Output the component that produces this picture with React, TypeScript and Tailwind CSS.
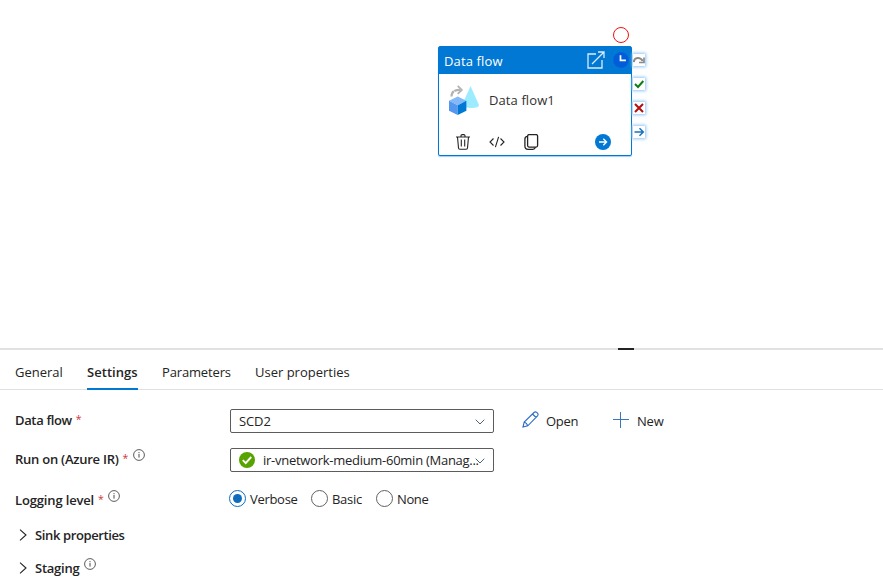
import type { ReactNode } from 'react';

const INK = 'text-[#242424]';

function Info({ className = '' }: { className?: string }) {
  return (
    <svg className={`shrink-0 ${className}`} width="12" height="12" viewBox="0 0 12 12" fill="none">
      <circle cx="6" cy="6" r="5.4" stroke="#4a4a4a" strokeWidth="0.9" />
      <path d="M6 5v3.6M6 3.1v1.1" stroke="#4a4a4a" strokeWidth="1" />
    </svg>
  );
}

function ChevronDown() {
  return (
    <svg className="mt-0.5 shrink-0" width="10" height="6" viewBox="0 0 10 6" fill="none">
      <path d="M.7.7 5 5 9.3.7" stroke="#4f6272" strokeWidth="1" />
    </svg>
  );
}

function ChevronRight() {
  return (
    <svg className="mr-2 ml-[19px] shrink-0" width="8" height="12" viewBox="0 0 8 12" fill="none">
      <path d="M1 .6 7 6 1 11.4" stroke="#242424" strokeWidth="1.1" />
    </svg>
  );
}

function Port({ children }: { children: ReactNode }) {
  return (
    <div className="flex h-3 w-3 items-center justify-center bg-white shadow-[0_0_3px_1px_#8fc5f2]">{children}</div>
  );
}

function Label({ children, className, required, info }: { children: ReactNode; className: string; required?: boolean; info?: boolean }) {
  return (
    <div className={`flex w-[215px] shrink-0 items-center ${className}`}>
      <span className="font-semibold whitespace-nowrap">{children}</span>
      {required && <span className="mb-0.5 ml-1 w-[5px] text-[10.5px] tracking-normal text-[#d13438]">*</span>}
      {info && <Info className="mb-[9px] ml-[5px]" />}
    </div>
  );
}

function Radio({ checked, children, className }: { checked?: boolean; children: ReactNode; className: string }) {
  return (
    <label className={`flex items-center ${className}`}>
      <span className={`mr-1 flex h-[17px] w-[17px] shrink-0 items-center justify-center rounded-full border ${checked ? 'border-[#0f6cbd]' : 'border-[#616161]'}`}>
        {checked && <span className="h-[9px] w-[9px] rounded-full bg-[#0f6cbd]" />}
      </span>
      <span className="mt-px">{children}</span>
    </label>
  );
}

function ActivityNode() {
  return (
    <div className="absolute top-[46px] left-[438px] h-[110px] w-[194px] rounded-[2px] border border-[#0078d4] bg-white shadow-[0_1px_1px_#9fceef]">
      <div className="flex h-[27px] items-center bg-[#0078d4] pl-[5px] text-white">
        <span className="w-[143px] text-[13px] tracking-[0.14px]">Data flow</span>
        <svg className="mb-0.5" width="18" height="18" viewBox="0 0 18 18" fill="none" stroke="#d9ebf9" strokeWidth="1.3">
          <path d="M9 3H1v14h14V9M5 13 17 1M11 1h6v6" />
        </svg>
        <svg className="mb-0.5 ml-2" width="16" height="16" viewBox="0 0 16 16">
          <circle cx="8" cy="8" r="7.8" fill="#015cda" />
          <path d="M7.5 3.2v5.2h5.4" stroke="#fff" strokeWidth="1.7" fill="none" />
        </svg>
      </div>
      <div className="flex h-[54px] items-center pl-2">
        <svg className="mb-0.5" width="34" height="34" viewBox="0 0 34 34">
          <path d="M23.500 3 32 22q0 3-7.500 3-5.500 0-8.500-2.500V20z" fill="#9cebff" />
          <path d="M4.500 13.500C4.500 9 7 6.900 13 6.900" fill="none" stroke="#b3b3b3" strokeWidth="2.200" strokeDasharray="6 .6" />
          <path d="m10.700 2.900 4.100 4-4.100 4" fill="none" stroke="#b3b3b3" strokeWidth="1.800" />
          <path d="m10.700 13.500 8.700 4.300-8.700 4.400L2 17.800z" fill="#83b9f9" />
          <path d="m2 17.800 8.700 4.400v9.900L2 27.700z" fill="#5596ee" />
          <path d="m19.400 17.800-8.700 4.400v9.900l8.700-4.400z" fill="#0078d4" />
        </svg>
        <span className="mb-0.5 ml-2 text-[13px] tracking-[0.1px] text-[#323130]">Data flow1</span>
      </div>
      <div className="flex h-7 items-center pl-[17px]">
        <svg width="14" height="16" viewBox="0 0 14 16" fill="none" stroke="#242424" strokeWidth="1.1">
          <path d="M0 3h14M5 3V1.800Q5 .6 6.200.6h1.600Q9 .6 9 1.800V3M1.500 3l1 11q.1 1.300 1.300 1.300h6.400q1.200 0 1.300-1.300l1-11M5.300 5.500v7M8.700 5.500v7" />
        </svg>
        <svg className="ml-[19px]" width="16" height="12" viewBox="0 0 16 12" fill="none" stroke="#242424" strokeWidth="1.1">
          <path d="M4.500 2.500 1 6l3.500 3.500M11.500 2.500 15 6l-3.500 3.500M9.600.8 6.400 11.200" />
        </svg>
        <svg className="ml-[19px]" width="15" height="16" viewBox="0 0 15 16" fill="none" stroke="#242424" strokeWidth="1.300">
          <rect x="3.600" y=".6" width="10" height="12.500" rx="1.500" />
          <path d="M3.600 2.400Q.9 2.600.9 5v7q0 3.300 3.200 3.300h4.700q2 0 2.600-2" />
        </svg>
        <svg className="ml-14" width="16" height="16" viewBox="0 0 16 16" fill="none">
          <circle cx="8" cy="8" r="8" fill="#0078d4" />
          <path d="M4 8h7.500M8.300 4.700 11.600 8l-3.300 3.300" stroke="#fff" strokeWidth="1.300" />
        </svg>
      </div>
    </div>
  );
}

export default function App() {
  return (
    <div className={`h-[585px] w-[883px] overflow-hidden bg-white font-['Open_Sans','Noto_Sans',sans-serif] text-[13px] leading-[18px] ${INK}`}>
      <div className="relative h-[348px]">
        <div className="absolute top-[27px] left-[613px] h-4 w-4 rounded-full border border-[#f01010]" />
        <ActivityNode />
        <div className="absolute top-[54px] left-[633px] flex flex-col gap-3">
          <Port>
            <svg width="12" height="12" viewBox="0 0 12 12" fill="none" stroke="#8a8a8a">
              <path d="M.8 8.200Q1.200 4 5 4q3 0 4.700 3" strokeWidth="2" />
              <path d="M11 3.500v5H6" strokeWidth="1.700" />
            </svg>
          </Port>
          <Port>
            <svg width="12" height="12" viewBox="0 0 12 12" fill="none">
              <path d="m2 6 3 3 5.300-6" stroke="#107c10" strokeWidth="2" />
            </svg>
          </Port>
          <Port>
            <svg width="12" height="12" viewBox="0 0 12 12" fill="none">
              <path d="m2 2 8 8M10 2l-8 8" stroke="#b50e0e" strokeWidth="2" />
            </svg>
          </Port>
          <Port>
            <svg width="12" height="12" viewBox="0 0 12 12" fill="none">
              <path d="M1.500 6h8.500M6.500 2.200 10.300 6 6.500 9.800" stroke="#1971bd" strokeWidth="1.500" />
            </svg>
          </Port>
        </div>
      </div>
      <div className="h-0.5 bg-[#e1e1e1] pl-[618px]"><div className="h-0.5 w-4 bg-[#242424]" /></div>
      <nav className="flex h-10 border-b border-[#e0e0e0] pl-[15px]">
        <span className="mr-6 w-12 pt-[13px] whitespace-nowrap">General</span>
        <span className="mr-6 h-10 w-[51px] border-b-2 border-[#0078d4] pt-[13px] font-semibold tracking-[0.05px] whitespace-nowrap">Settings</span>
        <span className="mr-6 w-[69px] pt-[13px] tracking-[-0.15px] whitespace-nowrap">Parameters</span>
        <span className="pt-[13px] whitespace-nowrap">User properties</span>
      </nav>
      <div className="pt-[19px] pl-[15px]">
        <div className="flex h-6 items-center">
          <Label required className="mb-0.5 tracking-[-0.35px]">Data flow</Label>
          <div className="flex h-6 w-[264px] items-center justify-between rounded-[2px] border border-[#5c5c5c] pr-2 pl-2">
            <span className="tracking-[-0.1px]">SCD2</span><ChevronDown />
          </div>
          <svg className="mb-[3px] ml-7" width="17" height="17" viewBox="0 0 17 17" fill="none" stroke="#2b6cc4" strokeWidth="1.100">
            <path d="m1 16 1.200-5L12 1.500q1.300-1.200 2.700-.1l.8.8q1.200 1.400 0 2.700L5.800 14.800zM10.500 3l3.600 3.500M2.200 11q2.500.7 3.600 3.800" />
          </svg>
          <span className="ml-[7px] w-[67px] tracking-[-0.3px]">Open</span>
          <svg className="mb-[3px]" width="16" height="16" viewBox="0 0 16 16" stroke="#3a76c0"><path d="M0 7.500h16M7.500 0v16" /></svg>
          <span className="ml-2 tracking-[-0.2px]">New</span>
        </div>
        <div className="mt-[15px] flex h-6 items-center">
          <Label required info className="mb-0.5 tracking-[-0.25px]">Run on (Azure IR)</Label>
          <div className="flex h-6 w-[264px] items-center rounded-[2px] border border-[#5c5c5c] pr-2 pl-2">
            <svg className="mr-2 shrink-0" width="16" height="16" viewBox="0 0 16 16" fill="none">
              <circle cx="8" cy="8" r="8" fill="#57a300" /><path d="m3.800 8.200 2.900 2.900L12.200 5" stroke="#fff" strokeWidth="1.900" />
            </svg>
            <span className="w-[212px] tracking-[-0.27px] whitespace-nowrap">ir-vnetwork-medium-60min (Manag...</span><ChevronDown />
          </div>
        </div>
        <div className="mt-[15px] flex h-6 items-center">
          <Label required info className="mt-0.5 tracking-[-0.15px]">Logging level</Label>
          <Radio checked className="mb-0.5 -ml-px w-[82px] tracking-[-0.3px]">Verbose</Radio>
          <Radio className="mb-0.5 w-[65px] tracking-[-0.3px]">Basic</Radio>
          <Radio className="mb-0.5 w-[65px] tracking-[-0.4px]">None</Radio>
        </div>
      </div>
      <div className="mt-3 flex h-6 items-center"><ChevronRight /><Label className="tracking-[-0.38px]">Sink properties</Label></div>
      <div className="mt-[9px] flex h-6 items-center"><ChevronRight /><Label info className="tracking-[-0.25px]">Staging</Label></div>
    </div>
  );
}
